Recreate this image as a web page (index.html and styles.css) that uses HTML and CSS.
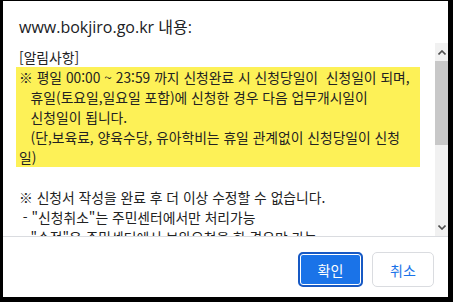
FILE: index.html
```html
<!DOCTYPE html>
<html lang="ko">
<head>
    <meta charset="UTF-8">
    <meta name="viewport" content="width=device-width, initial-scale=1.0">
    <title>www.bokjiro.go.kr 내용</title>
    <link rel="stylesheet" href="styles.css">
</head>
<body>
    <div class="dialog">
        <div class="title">www.bokjiro.go.kr 내용:</div>

        <div class="message">
            <div class="message-body">
                <div class="line">[알림사항]</div>
                <div class="notice">
                    <div class="line">※ 평일 00:00 ~ 23:59 까지 신청완료 시 신청당일이  신청일이 되며,</div>
                    <div class="line">   휴일(토요일,일요일 포함)에 신청한 경우 다음 업무개시일이</div>
                    <div class="line">   신청일이 됩니다.</div>
                    <div class="line">   (단,보육료, 양육수당, 유아학비는 휴일 관계없이 신청당일이 신청</div>
                    <div class="line">일)</div>
                </div>
                <div class="line"> </div>
                <div class="line">※ 신청서 작성을 완료 후 더 이상 수정할 수 없습니다.</div>
                <div class="line"> - "신청취소"는 주민센터에서만 처리가능</div>
                <div class="line">   "수정"은 주민센터에서 보완요청을 한 경우만 가능</div>
            </div>

            <!-- scrollbar (drawn, the real one is hidden in headless) -->
            <div class="scrollbar">
                <div class="scroll-btn">
                    <svg width="8" height="5" viewBox="0 0 8 5"><path d="M0.5 4.5 L4 1 L7.5 4.5" fill="none" stroke="#505050" stroke-width="1.6"/></svg>
                </div>
                <div class="scroll-track"><div class="scroll-thumb"></div></div>
                <div class="scroll-btn">
                    <svg width="8" height="5" viewBox="0 0 8 5"><path d="M0.5 0.5 L4 4 L7.5 0.5" fill="none" stroke="#505050" stroke-width="1.6"/></svg>
                </div>
            </div>
        </div>

        <div class="buttons">
            <button class="btn btn-ok">확인</button>
            <button class="btn btn-cancel">취소</button>
        </div>
    </div>
</body>
</html>
```

FILE: styles.css
```css
html, body {
    margin: 0;
    height: 302px;
    background: #000;
    overflow: hidden;
}
.dialog {
    margin: 1px 5px 5px 3px;
    height: 296px;
    background: #fff;
    display: flex;
    flex-direction: column;
    font-family: "Open Sans", "Noto Sans CJK KR", sans-serif;
    color: #202124;
}
.title {
    height: 42px;
    box-sizing: border-box;
    padding: 15px 16px 0;
    font-size: 16px;
    line-height: 22px;
}
.message {
    display: flex;
    height: 194px;
    box-sizing: border-box;
    padding-left: 13px;
    border-bottom: 1px solid #dadce0;
}
.message-body {
    flex: 1;
    overflow: hidden;
    padding: 4px 15px 0 0;
    font-family: "Noto Sans CJK KR", sans-serif;
    font-size: 13.8px;
    line-height: 20px;
    color: #222;
}
.line {
    white-space: pre;
    padding-left: 3px;
}
.notice {
    background: #fdf157;
}
.scrollbar {
    width: 13px;
    background: #f1f1f1;
    display: flex;
    flex-direction: column;
}
.scroll-btn {
    height: 18px;
    display: flex;
    align-items: center;
    justify-content: center;
}
.scroll-track {
    flex: 1;
}
.scroll-thumb {
    height: 84px;
    background: #c8c8c8;
}
.buttons {
    display: flex;
    justify-content: flex-end;
    align-items: flex-start;
    gap: 9px;
    padding: 15px 14px 0 0;
}
.btn {
    font-family: "Noto Sans CJK KR", sans-serif;
    font-size: 14px;
    height: 35px;
    border-radius: 5px;
    cursor: pointer;
}
.btn-ok {
    width: 65px;
    background: #1a73e8;
    color: #fff;
    border: 2px solid #1759c4;
    box-shadow: inset 0 0 0 1px #fff;
}
.btn-cancel {
    width: 62px;
    background: #fff;
    color: #1a73e8;
    border: 1px solid #dadce0;
}
```
